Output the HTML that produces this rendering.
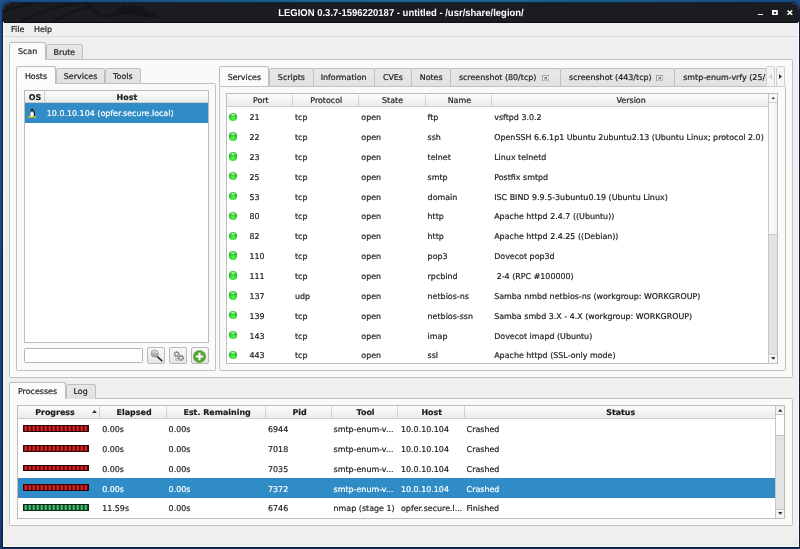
<!DOCTYPE html>
<html><head><meta charset="utf-8"><title>LEGION</title>
<style>
*{box-sizing:border-box;margin:0;padding:0}
html,body{width:800px;height:549px;overflow:hidden}
body{text-rendering:geometricPrecision;background:linear-gradient(90deg,#1c4f8e 0,#1b5589 15%,#1e6a9a 50%,#1b588c 85%,#1a4b85 100%) 0 0/800px 4px no-repeat,linear-gradient(180deg,#1c4f8e 0%,#174a7c 50%,#15427a 92%,#143a68 100%);font-family:"DejaVu Sans","Liberation Sans",sans-serif;font-size:7.95px;color:#1c1c1c;position:relative}
.a{position:absolute}
#win{will-change:transform;left:3px;top:3px;width:796px;height:544px;background:#efefef;border-radius:7px 7px 0 0;overflow:hidden;box-shadow:0 0 1.2px 0.3px rgba(5,10,25,.75)}
#win:after{content:"";position:absolute;left:0;top:19px;right:0;bottom:0;border:1.2px solid #f8f8f8;border-top:none;pointer-events:none}
#title{left:0;top:0;width:796px;height:19.5px;background:#1b1c22;overflow:hidden;border-bottom:1px solid #0e0f13}
#title .t{left:0;width:796px;top:5px;text-align:center;color:#fff;font-family:"Liberation Sans",sans-serif;font-weight:bold;font-size:10px;line-height:12px;text-rendering:geometricPrecision;transform:scaleX(0.948);transform-origin:397.8px 6px}
.tx{white-space:nowrap;line-height:10px;height:10px;-webkit-text-stroke:0.2px currentColor}
.tab{background:linear-gradient(#e8e8e8,#e1e1e1);border:1px solid #c0c0c0;border-bottom:none;border-radius:2.5px 2.5px 0 0}
.tab.sel{background:#fbfbfb;border-color:#bcbcbc}
.pane{border:1px solid #c1c1c1;background:#fafafa;border-radius:1.5px}
.list{background:#fff;border:1px solid #bcbcbc}
.hdr{background:linear-gradient(#fcfcfc,#ebebeb);border-bottom:1px solid #cdcdcd}
.b{font-weight:bold}
.dot{border-radius:50%;background:radial-gradient(ellipse 42% 20% at 50% 21%,rgba(210,255,205,.9) 0%,rgba(170,245,165,.7) 55%,rgba(120,230,120,0) 100%),radial-gradient(circle at 50% 72%,#55f550 0%,#3ee23a 30%,#18ae18 62%,#17a517 85%,#2aa82a 100%)}
.sb{background:#e3e3e3;border-left:1px solid #c6c6c6}
.btn{border:1px solid #b9b9b9;border-radius:2px;background:linear-gradient(#f8f8f8,#e6e6e6)}
.hl{background:#308cc6;color:#fff}
svg{display:block}
.pb{border:0.8px solid #2a0707;background:repeating-linear-gradient(90deg,#2e0202 0,#6a0808 0.6px,#de1f1f 1.3px,#f83636 2px,#de1f1f 2.7px,#6a0808 3.4px,#2e0202 4px);background-position:-0.3px 0}
.pb.g{border-color:#0a2412;background:repeating-linear-gradient(90deg,#06200f 0,#15502c 0.6px,#42bd72 1.3px,#5fe090 2px,#42bd72 2.7px,#15502c 3.4px,#06200f 4px);background-position:-0.3px 0}
</style></head><body>
<div id="win" class="a">
 <div id="title" class="a">
  <svg class="a" style="left:0;top:-1px" width="796" height="21" viewBox="0 0 796 21"><g fill="none" stroke="#14151a" stroke-linecap="round">
   <path d="M-3 10.5 C12 5 26 1.5 42 -1" stroke-width="2.6"/>
   <path d="M16 21 C34 10 55 3 88 -1" stroke-width="3.2"/>
   <path d="M49 21 C60 13.5 70 9 84 5.5" stroke-width="2.6"/>
   <path d="M83 -1 C89 6 93 12.5 101 14 C109 15 117 10 128 8.5" stroke-width="3.6"/>
   <path d="M112 9 L121 2.5 L123.5 6 L131 1.5 L133 6 L140 4 L142 8 L150 11.5 L158 17 L148 15.5 L140 14 L130 12.5 L118 13 Z" fill="#14151a" stroke="none"/>
  </g></svg>
  <div class="a t">LEGION 0.3.7-1596220187 - untitled - /usr/share/legion/</div>
  <div class="a" style="left:754.5px;top:10.6px;width:5.5px;height:1.9px;background:#fff"></div>
  <svg class="a" style="left:769px;top:6.8px" width="5.8" height="5.6" viewBox="0 0 5.8 5.6"><rect x="0.95" y="0.95" width="3.9" height="3.7" fill="none" stroke="#fff" stroke-width="1.9"/></svg>
  <svg class="a" style="left:783.8px;top:7px" width="5.8" height="5.4" viewBox="0 0 5.8 5.4"><path d="M0.6 0.5L5.2 4.9M5.2 0.5L0.6 4.9" stroke="#fff" stroke-width="1.5" fill="none"/></svg>
 </div>
<div class="a " style="left:0.00px;top:19.50px;width:796.00px;height:14.20px;background:#efefef;border-bottom:1px solid #dadada;"></div>
<div class="a tx " style="left:8.00px;top:21.95px;">File</div>
<div class="a tx " style="left:31.00px;top:21.95px;">Help</div>
<div class="a pane" style="left:6.00px;top:56.20px;width:784.00px;height:318.50px;"></div>
<div class="a tab sel" style="left:6.00px;top:39.40px;width:36.80px;height:17.80px;"></div>
<div class="a tab" style="left:43.00px;top:41.20px;width:36.80px;height:15.20px;"></div>
<div class="a tx " style="left:6.50px;top:44.15px;width:36.20px;text-align:center;">Scan</div>
<div class="a tx " style="left:43.00px;top:44.75px;width:36.80px;text-align:center;">Brute</div>
<div class="a pane" style="left:13.40px;top:80.20px;width:199.30px;height:288.20px;"></div>
<div class="a tab sel" style="left:13.40px;top:63.00px;width:39.60px;height:18.20px;"></div>
<div class="a tab" style="left:52.60px;top:64.80px;width:49.60px;height:15.60px;"></div>
<div class="a tab" style="left:102.20px;top:64.80px;width:36.00px;height:15.60px;"></div>
<div class="a tx " style="left:13.70px;top:68.65px;width:38.60px;text-align:center;">Hosts</div>
<div class="a tx " style="left:52.80px;top:69.35px;width:49.50px;text-align:center;">Services</div>
<div class="a tx " style="left:102.30px;top:69.35px;width:35.10px;text-align:center;">Tools</div>
<div class="a list" style="left:21.30px;top:87.40px;width:185.00px;height:252.20px;"></div>
<div class="a hdr" style="left:22.30px;top:88.40px;width:183.00px;height:12.00px;"></div>
<div class="a " style="left:41.00px;top:88.40px;width:1.00px;height:12.00px;background:#d0d0d0"></div>
<div class="a tx b" style="left:22.30px;top:90.35px;width:19.20px;text-align:center;">OS</div>
<div class="a tx b" style="left:42.50px;top:90.35px;width:162.80px;text-align:center;">Host</div>
<div class="a hl" style="left:22.30px;top:100.40px;width:183.00px;height:19.40px;"></div>
<div class="a tx " style="left:43.80px;top:106.45px;color:#fff">10.0.10.104 (opfer.secure.local)</div>
<div class="a " style="left:24.90px;top:104.80px;width:8.60px;height:10.40px;"><svg width="8.6" height="10.4" viewBox="0 0 86 104"><ellipse cx="45" cy="60" rx="26" ry="36" fill="#1d2228"/><ellipse cx="42" cy="22" rx="13" ry="17" fill="#1a1d22"/><ellipse cx="40" cy="64" rx="18.5" ry="29" fill="#f3f5f7"/><ellipse cx="41" cy="33" rx="6" ry="5" fill="#e9c21a"/><ellipse cx="17" cy="90" rx="17" ry="10" fill="#e2b90c"/><ellipse cx="67" cy="90" rx="17" ry="10" fill="#e2b90c"/></svg></div>
<div class="a " style="left:21.30px;top:344.80px;width:118.80px;height:15.60px;background:#fff;border:1px solid #b5b5b5;border-radius:1.5px"></div>
<div class="a btn" style="left:144.20px;top:344.20px;width:18.20px;height:16.60px;"></div>
<div class="a btn" style="left:166.00px;top:344.20px;width:18.20px;height:16.60px;"></div>
<div class="a btn" style="left:188.00px;top:344.20px;width:18.20px;height:16.60px;"></div>
<div class="a " style="left:146.60px;top:345.50px;width:14.00px;height:13.00px;"><svg width="14" height="13" viewBox="0 0 28 26"><path d="M14.5 15 L23.5 23.5" stroke="#222" stroke-width="3.4" stroke-linecap="round"/><circle cx="9.5" cy="9" r="7.2" fill="#a9adb0" stroke="#8a8d90" stroke-width="1.6"/><path d="M3 8.5 A6.5 6.5 0 0 1 16 8.5Z" fill="#c9cccf"/></svg></div>
<div class="a " style="left:168.60px;top:346.60px;width:13.00px;height:12.60px;"><svg width="13" height="12.6" viewBox="0 0 26 25.2"><g fill="none"><circle cx="9.3" cy="8.4" r="4.6" stroke="#7e7e7e" stroke-width="3.2" stroke-dasharray="2.3 1.3"/><circle cx="9.3" cy="8.4" r="3.4" stroke="#8e8e8e" stroke-width="2"/><circle cx="18" cy="15.8" r="4.6" stroke="#7e7e7e" stroke-width="3.2" stroke-dasharray="2.3 1.3"/><circle cx="18" cy="15.8" r="3.4" stroke="#8e8e8e" stroke-width="2"/><circle cx="9.6" cy="18.6" r="2.3" stroke="#a8a8a8" stroke-width="1.8"/></g></svg></div>
<div class="a " style="left:190.20px;top:346.50px;width:13.00px;height:13.00px;"><svg width="13" height="13" viewBox="0 0 26 26"><circle cx="13" cy="13" r="12.2" fill="#55a630"/><circle cx="13" cy="13" r="12.2" fill="none" stroke="#3f8a22" stroke-width="1"/><path d="M13 5.5V20.5M5.5 13H20.5" stroke="#fff" stroke-width="4.2"/></svg></div>
<div class="a pane" style="left:216.20px;top:82.60px;width:567.00px;height:285.10px;"></div>
<div class="a" style="left:216.2px;top:61px;width:546.8px;height:22.4px;overflow:hidden">
<div class="a tab sel" style="left:0.00px;top:2.0px;width:49.80px;height:20.4px"></div>
<div class="a tx" style="left:0.50px;top:8.75px;width:49.40px;text-align:center">Services</div>
<div class="a tab" style="left:50.10px;top:4.2px;width:44.30px;height:17.4px"></div>
<div class="a tx" style="left:50.60px;top:9.25px;width:43.30px;text-align:center">Scripts</div>
<div class="a tab" style="left:93.40px;top:4.2px;width:62.10px;height:17.4px"></div>
<div class="a tx" style="left:93.90px;top:9.25px;width:61.10px;text-align:center">Information</div>
<div class="a tab" style="left:154.50px;top:4.2px;width:38.50px;height:17.4px"></div>
<div class="a tx" style="left:155.00px;top:9.25px;width:37.50px;text-align:center">CVEs</div>
<div class="a tab" style="left:192.00px;top:4.2px;width:40.00px;height:17.4px"></div>
<div class="a tx" style="left:192.50px;top:9.25px;width:39.00px;text-align:center">Notes</div>
<div class="a tab" style="left:231.00px;top:4.2px;width:111.20px;height:17.4px"></div>
<div class="a tx" style="left:239.70px;top:9.25px">screenshot (80/tcp)</div>
<div class="a cl" style="left:322.50px;top:10.60px"><svg width="7.4" height="6.4" viewBox="0 0 7.4 6.4"><rect x="0.5" y="0.5" width="6.4" height="5.4" fill="#f4f4f4" stroke="#9a9a9a" stroke-width="0.9"/><path d="M2.3 1.8L5.1 4.6M5.1 1.8L2.3 4.6" stroke="#444" stroke-width="0.95"/></svg></div>
<div class="a tab" style="left:341.20px;top:4.2px;width:115.10px;height:17.4px"></div>
<div class="a tx" style="left:349.90px;top:9.25px">screenshot (443/tcp)</div>
<div class="a cl" style="left:436.60px;top:10.60px"><svg width="7.4" height="6.4" viewBox="0 0 7.4 6.4"><rect x="0.5" y="0.5" width="6.4" height="5.4" fill="#f4f4f4" stroke="#9a9a9a" stroke-width="0.9"/><path d="M2.3 1.8L5.1 4.6M5.1 1.8L2.3 4.6" stroke="#444" stroke-width="0.95"/></svg></div>
<div class="a tab" style="left:455.30px;top:4.2px;width:126.50px;height:17.4px"></div>
<div class="a tx" style="left:464.00px;top:9.25px">smtp-enum-vrfy (25/</div>
</div>
<div class="a " style="left:763.00px;top:63.20px;width:9.40px;height:21.00px;background:#f4f4f4;border:1px solid #d0d0d0;border-radius:1.5px"></div>
<div class="a " style="left:772.60px;top:63.20px;width:9.30px;height:21.00px;background:#f4f4f4;border:1px solid #d0d0d0;border-radius:1.5px"></div>
<div class="a " style="left:766.20px;top:71.20px;width:3.00px;height:5.00px;"><svg width="3" height="5" viewBox="0 0 3 5"><path d="M3 0L0 2.5L3 5Z" fill="#c8c8c8"/></svg></div>
<div class="a " style="left:776.00px;top:71.20px;width:3.00px;height:5.00px;"><svg width="3" height="5" viewBox="0 0 3 5"><path d="M0 0L3 2.5L0 5Z" fill="#333"/></svg></div>
<div class="a list" style="left:223.30px;top:90.20px;width:552.00px;height:270.80px;"></div>
<div class="a hdr" style="left:224.30px;top:91.20px;width:550.00px;height:12.40px;"></div>
<div class="a " style="left:288.90px;top:91.60px;width:1.00px;height:12.00px;background:#d2d2d2"></div>
<div class="a tx " style="left:225.30px;top:93.45px;width:65.10px;text-align:center;">Port</div>
<div class="a " style="left:354.70px;top:91.60px;width:1.00px;height:12.00px;background:#d2d2d2"></div>
<div class="a tx " style="left:290.40px;top:93.45px;width:65.80px;text-align:center;">Protocol</div>
<div class="a " style="left:421.50px;top:91.60px;width:1.00px;height:12.00px;background:#d2d2d2"></div>
<div class="a tx " style="left:356.20px;top:93.45px;width:66.80px;text-align:center;">State</div>
<div class="a " style="left:488.20px;top:91.60px;width:1.00px;height:12.00px;background:#d2d2d2"></div>
<div class="a tx " style="left:423.00px;top:93.45px;width:66.70px;text-align:center;">Name</div>
<div class="a " style="left:765.10px;top:91.60px;width:1.00px;height:12.00px;background:#d2d2d2"></div>
<div class="a tx " style="left:489.70px;top:93.45px;width:276.90px;text-align:center;">Version</div>
<div class="a sb" style="left:765.20px;top:91.20px;width:9.00px;height:268.80px;"></div>
<div class="a " style="left:766.20px;top:91.20px;width:8.00px;height:9.20px;background:#f6f6f6;border-bottom:1px solid #cfcfcf"></div>
<div class="a " style="left:766.20px;top:350.60px;width:8.00px;height:9.40px;background:#f6f6f6;border-top:1px solid #cfcfcf"></div>
<div class="a " style="left:766.20px;top:100.40px;width:8.00px;height:131.60px;background:linear-gradient(90deg,#fafafa,#f3f3f3);border-bottom:1px solid #cbcbcb"></div>
<div class="a " style="left:767.70px;top:93.80px;width:4.60px;height:2.70px;"><svg width="4.6" height="2.7" viewBox="0 0 4 3" preserveAspectRatio="none"><path d="M0 3L2 0L4 3Z" fill="#333"/></svg></div>
<div class="a " style="left:767.70px;top:354.20px;width:4.60px;height:2.70px;"><svg width="4.6" height="2.7" viewBox="0 0 4 3" preserveAspectRatio="none"><path d="M0 0L2 3L4 0Z" fill="#333"/></svg></div>
<div class="a dot" style="left:225.90px;top:109.50px;width:8.40px;height:8.40px;"></div>
<div class="a tx " style="left:246.50px;top:110.15px;">21</div>
<div class="a tx " style="left:292.00px;top:110.15px;">tcp</div>
<div class="a tx " style="left:358.30px;top:110.15px;">open</div>
<div class="a tx " style="left:424.60px;top:110.15px;">ftp</div>
<div class="a tx " style="left:491.20px;top:110.15px;">vsftpd 3.0.2</div>
<div class="a dot" style="left:225.90px;top:129.35px;width:8.40px;height:8.40px;"></div>
<div class="a tx " style="left:246.50px;top:130.00px;">22</div>
<div class="a tx " style="left:292.00px;top:130.00px;">tcp</div>
<div class="a tx " style="left:358.30px;top:130.00px;">open</div>
<div class="a tx " style="left:424.60px;top:130.00px;">ssh</div>
<div class="a tx " style="left:491.20px;top:130.00px;">OpenSSH 6.6.1p1 Ubuntu 2ubuntu2.13 (Ubuntu Linux; protocol 2.0)</div>
<div class="a dot" style="left:225.90px;top:149.20px;width:8.40px;height:8.40px;"></div>
<div class="a tx " style="left:246.50px;top:149.85px;">23</div>
<div class="a tx " style="left:292.00px;top:149.85px;">tcp</div>
<div class="a tx " style="left:358.30px;top:149.85px;">open</div>
<div class="a tx " style="left:424.60px;top:149.85px;">telnet</div>
<div class="a tx " style="left:491.20px;top:149.85px;">Linux telnetd</div>
<div class="a dot" style="left:225.90px;top:169.05px;width:8.40px;height:8.40px;"></div>
<div class="a tx " style="left:246.50px;top:169.70px;">25</div>
<div class="a tx " style="left:292.00px;top:169.70px;">tcp</div>
<div class="a tx " style="left:358.30px;top:169.70px;">open</div>
<div class="a tx " style="left:424.60px;top:169.70px;">smtp</div>
<div class="a tx " style="left:491.20px;top:169.70px;">Postfix smtpd</div>
<div class="a dot" style="left:225.90px;top:188.90px;width:8.40px;height:8.40px;"></div>
<div class="a tx " style="left:246.50px;top:189.55px;">53</div>
<div class="a tx " style="left:292.00px;top:189.55px;">tcp</div>
<div class="a tx " style="left:358.30px;top:189.55px;">open</div>
<div class="a tx " style="left:424.60px;top:189.55px;">domain</div>
<div class="a tx " style="left:491.20px;top:189.55px;">ISC BIND 9.9.5-3ubuntu0.19 (Ubuntu Linux)</div>
<div class="a dot" style="left:225.90px;top:208.75px;width:8.40px;height:8.40px;"></div>
<div class="a tx " style="left:246.50px;top:209.40px;">80</div>
<div class="a tx " style="left:292.00px;top:209.40px;">tcp</div>
<div class="a tx " style="left:358.30px;top:209.40px;">open</div>
<div class="a tx " style="left:424.60px;top:209.40px;">http</div>
<div class="a tx " style="left:491.20px;top:209.40px;">Apache httpd 2.4.7 ((Ubuntu))</div>
<div class="a dot" style="left:225.90px;top:228.60px;width:8.40px;height:8.40px;"></div>
<div class="a tx " style="left:246.50px;top:229.25px;">82</div>
<div class="a tx " style="left:292.00px;top:229.25px;">tcp</div>
<div class="a tx " style="left:358.30px;top:229.25px;">open</div>
<div class="a tx " style="left:424.60px;top:229.25px;">http</div>
<div class="a tx " style="left:491.20px;top:229.25px;">Apache httpd 2.4.25 ((Debian))</div>
<div class="a dot" style="left:225.90px;top:248.45px;width:8.40px;height:8.40px;"></div>
<div class="a tx " style="left:246.50px;top:249.10px;">110</div>
<div class="a tx " style="left:292.00px;top:249.10px;">tcp</div>
<div class="a tx " style="left:358.30px;top:249.10px;">open</div>
<div class="a tx " style="left:424.60px;top:249.10px;">pop3</div>
<div class="a tx " style="left:491.20px;top:249.10px;">Dovecot pop3d</div>
<div class="a dot" style="left:225.90px;top:268.30px;width:8.40px;height:8.40px;"></div>
<div class="a tx " style="left:246.50px;top:268.95px;">111</div>
<div class="a tx " style="left:292.00px;top:268.95px;">tcp</div>
<div class="a tx " style="left:358.30px;top:268.95px;">open</div>
<div class="a tx " style="left:424.60px;top:268.95px;">rpcbind</div>
<div class="a tx " style="left:491.20px;top:268.95px;">&nbsp;2-4 (RPC #100000)</div>
<div class="a dot" style="left:225.90px;top:288.15px;width:8.40px;height:8.40px;"></div>
<div class="a tx " style="left:246.50px;top:288.80px;">137</div>
<div class="a tx " style="left:292.00px;top:288.80px;">udp</div>
<div class="a tx " style="left:358.30px;top:288.80px;">open</div>
<div class="a tx " style="left:424.60px;top:288.80px;">netbios-ns</div>
<div class="a tx " style="left:491.20px;top:288.80px;">Samba nmbd netbios-ns (workgroup: WORKGROUP)</div>
<div class="a dot" style="left:225.90px;top:308.00px;width:8.40px;height:8.40px;"></div>
<div class="a tx " style="left:246.50px;top:308.65px;">139</div>
<div class="a tx " style="left:292.00px;top:308.65px;">tcp</div>
<div class="a tx " style="left:358.30px;top:308.65px;">open</div>
<div class="a tx " style="left:424.60px;top:308.65px;">netbios-ssn</div>
<div class="a tx " style="left:491.20px;top:308.65px;">Samba smbd 3.X - 4.X (workgroup: WORKGROUP)</div>
<div class="a dot" style="left:225.90px;top:327.85px;width:8.40px;height:8.40px;"></div>
<div class="a tx " style="left:246.50px;top:328.50px;">143</div>
<div class="a tx " style="left:292.00px;top:328.50px;">tcp</div>
<div class="a tx " style="left:358.30px;top:328.50px;">open</div>
<div class="a tx " style="left:424.60px;top:328.50px;">imap</div>
<div class="a tx " style="left:491.20px;top:328.50px;">Dovecot imapd (Ubuntu)</div>
<div class="a dot" style="left:225.90px;top:347.70px;width:8.40px;height:8.40px;"></div>
<div class="a tx " style="left:246.50px;top:348.35px;">443</div>
<div class="a tx " style="left:292.00px;top:348.35px;">tcp</div>
<div class="a tx " style="left:358.30px;top:348.35px;">open</div>
<div class="a tx " style="left:424.60px;top:348.35px;">ssl</div>
<div class="a tx " style="left:491.20px;top:348.35px;">Apache httpd (SSL-only mode)</div>
<div class="a pane" style="left:6.00px;top:394.80px;width:784.00px;height:127.80px;"></div>
<div class="a tab sel" style="left:6.00px;top:378.60px;width:56.60px;height:17.20px;"></div>
<div class="a tab" style="left:62.80px;top:380.60px;width:30.60px;height:15.00px;"></div>
<div class="a tx " style="left:6.50px;top:383.55px;width:56.00px;text-align:center;">Processes</div>
<div class="a tx " style="left:62.80px;top:384.35px;width:29.70px;text-align:center;">Log</div>
<div class="a list" style="left:13.60px;top:402.30px;width:768.40px;height:113.60px;"></div>
<div class="a hdr" style="left:14.60px;top:403.30px;width:766.40px;height:12.60px;"></div>
<div class="a " style="left:96.10px;top:403.30px;width:1.00px;height:12.60px;background:#d2d2d2"></div>
<div class="a tx b" style="left:32.20px;top:405.35px;">Progress</div>
<div class="a " style="left:163.10px;top:403.30px;width:1.00px;height:12.60px;background:#d2d2d2"></div>
<div class="a tx b" style="left:97.60px;top:405.35px;width:67.00px;text-align:center;">Elapsed</div>
<div class="a " style="left:262.10px;top:403.30px;width:1.00px;height:12.60px;background:#d2d2d2"></div>
<div class="a tx b" style="left:164.60px;top:405.35px;width:99.00px;text-align:center;">Est. Remaining</div>
<div class="a " style="left:328.10px;top:403.30px;width:1.00px;height:12.60px;background:#d2d2d2"></div>
<div class="a tx b" style="left:263.60px;top:405.35px;width:66.00px;text-align:center;">Pid</div>
<div class="a " style="left:394.10px;top:403.30px;width:1.00px;height:12.60px;background:#d2d2d2"></div>
<div class="a tx b" style="left:329.60px;top:405.35px;width:66.00px;text-align:center;">Tool</div>
<div class="a " style="left:460.50px;top:403.30px;width:1.00px;height:12.60px;background:#d2d2d2"></div>
<div class="a tx b" style="left:395.60px;top:405.35px;width:66.40px;text-align:center;">Host</div>
<div class="a " style="left:771.90px;top:403.30px;width:1.00px;height:12.60px;background:#d2d2d2"></div>
<div class="a tx b" style="left:462.00px;top:405.35px;width:311.40px;text-align:center;">Status</div>
<div class="a " style="left:89.00px;top:407.20px;width:4.80px;height:2.90px;"><svg width="4.8" height="2.9" viewBox="0 0 4.8 2.9"><path d="M0 2.9L2.4 0L4.8 2.9Z" fill="#333"/></svg></div>
<div class="a sb" style="left:772.40px;top:403.30px;width:8.60px;height:111.60px;"></div>
<div class="a " style="left:773.40px;top:403.30px;width:7.60px;height:9.00px;background:#f3f3f3;border-bottom:1px solid #c6c6c6"></div>
<div class="a " style="left:773.40px;top:505.60px;width:7.60px;height:9.30px;background:#f3f3f3;border-top:1px solid #c6c6c6"></div>
<div class="a " style="left:773.40px;top:412.30px;width:7.60px;height:21.00px;background:#fdfdfd;border-bottom:1px solid #c6c6c6"></div>
<div class="a " style="left:774.60px;top:405.90px;width:4.60px;height:2.70px;"><svg width="4.6" height="2.7" viewBox="0 0 4 3" preserveAspectRatio="none"><path d="M0 3L2 0L4 3Z" fill="#333"/></svg></div>
<div class="a " style="left:774.60px;top:508.90px;width:4.60px;height:2.70px;"><svg width="4.6" height="2.7" viewBox="0 0 4 3" preserveAspectRatio="none"><path d="M0 0L2 3L4 0Z" fill="#333"/></svg></div>
<div class="a pb" style="left:20.10px;top:421.90px;width:66.40px;height:6.90px;"></div>
<div class="a tx " style="left:99.20px;top:422.05px;">0.00s</div>
<div class="a tx " style="left:165.60px;top:422.05px;">0.00s</div>
<div class="a tx " style="left:265.00px;top:422.05px;">6944</div>
<div class="a tx " style="left:330.60px;top:422.05px;">smtp-enum-v...</div>
<div class="a tx " style="left:398.00px;top:422.05px;">10.0.10.104</div>
<div class="a tx " style="left:463.60px;top:422.05px;">Crashed</div>
<div class="a pb" style="left:20.10px;top:441.75px;width:66.40px;height:6.90px;"></div>
<div class="a tx " style="left:99.20px;top:441.90px;">0.00s</div>
<div class="a tx " style="left:165.60px;top:441.90px;">0.00s</div>
<div class="a tx " style="left:265.00px;top:441.90px;">7018</div>
<div class="a tx " style="left:330.60px;top:441.90px;">smtp-enum-v...</div>
<div class="a tx " style="left:398.00px;top:441.90px;">10.0.10.104</div>
<div class="a tx " style="left:463.60px;top:441.90px;">Crashed</div>
<div class="a pb" style="left:20.10px;top:461.60px;width:66.40px;height:6.90px;"></div>
<div class="a tx " style="left:99.20px;top:461.75px;">0.00s</div>
<div class="a tx " style="left:165.60px;top:461.75px;">0.00s</div>
<div class="a tx " style="left:265.00px;top:461.75px;">7035</div>
<div class="a tx " style="left:330.60px;top:461.75px;">smtp-enum-v...</div>
<div class="a tx " style="left:398.00px;top:461.75px;">10.0.10.104</div>
<div class="a tx " style="left:463.60px;top:461.75px;">Crashed</div>
<div class="a hl" style="left:14.60px;top:475.00px;width:757.80px;height:19.90px;"></div>
<div class="a pb" style="left:20.10px;top:481.45px;width:66.40px;height:6.90px;"></div>
<div class="a tx " style="left:99.20px;top:481.60px;color:#fff;">0.00s</div>
<div class="a tx " style="left:165.60px;top:481.60px;color:#fff;">0.00s</div>
<div class="a tx " style="left:265.00px;top:481.60px;color:#fff;">7372</div>
<div class="a tx " style="left:330.60px;top:481.60px;color:#fff;">smtp-enum-v...</div>
<div class="a tx " style="left:398.00px;top:481.60px;color:#fff;">10.0.10.104</div>
<div class="a tx " style="left:463.60px;top:481.60px;color:#fff;">Crashed</div>
<div class="a pb g" style="left:20.10px;top:501.30px;width:66.40px;height:6.90px;"></div>
<div class="a tx " style="left:99.20px;top:501.45px;">11.59s</div>
<div class="a tx " style="left:165.60px;top:501.45px;">0.00s</div>
<div class="a tx " style="left:265.00px;top:501.45px;">6746</div>
<div class="a tx " style="left:330.60px;top:501.45px;">nmap (stage 1)</div>
<div class="a tx " style="left:398.00px;top:501.45px;">opfer.secure.l...</div>
<div class="a tx " style="left:463.60px;top:501.45px;">Finished</div>
<div class="a " style="left:786.50px;top:535.50px;width:8.50px;height:8.00px;"><svg width="8.5" height="8" viewBox="0 0 8.5 8"><g stroke="#e0e0e0" stroke-width="0.8"><path d="M6.5 1.2H8"/><path d="M4.6 3.2H8"/><path d="M2.6 5.2H8"/><path d="M0.6 7.2H8"/></g></svg></div>
</div>
</body></html>
